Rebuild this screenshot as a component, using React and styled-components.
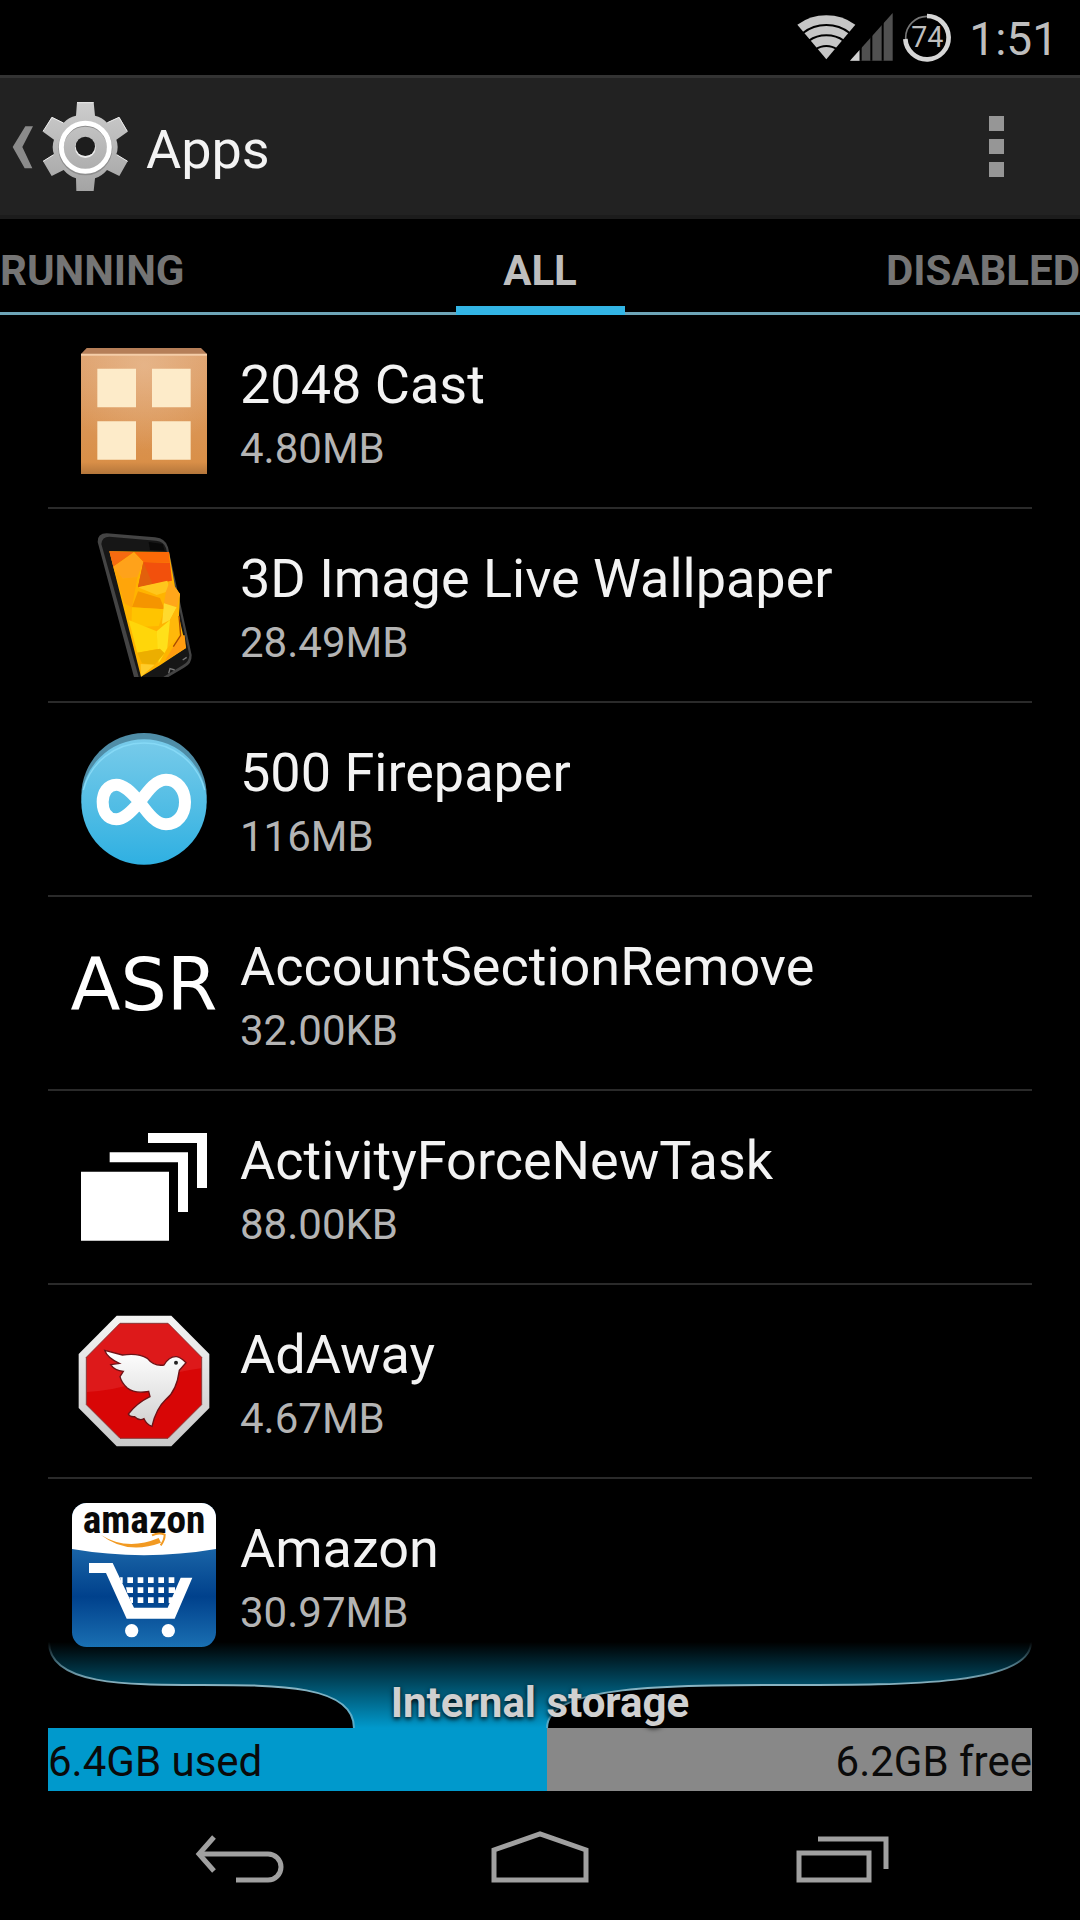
import React from 'react';
import styled, { createGlobalStyle, ThemeProvider } from 'styled-components';

const theme = {
  colors: {
    background: '#000000',
    actionBar: '#222222',
    text: '#f3f3f3',
    textSecondary: '#b4b4b4',
    textMuted: '#757575',
    holo: '#33b5e5',
    used: '#0099cc',
    free: '#888888',
    divider: '#2a2a2a',
    nav: '#a0a0a0'
  },
  fontSizes: {
    md: '42px',
    lg: '46px',
    xl: '54px'
  },
  gutter: '48px'
};

const GlobalStyle = createGlobalStyle`
  * {
    box-sizing: border-box;
  }

  body {
    margin: 0;
    background: #000;
    font-family: Roboto, sans-serif;
  }

  button {
    margin: 0;
    padding: 0;
    border: 0;
    background: none;
    color: inherit;
    font: inherit;
    text-align: left;
    cursor: pointer;
  }

  svg {
    display: block;
  }
`;

const Screen = styled.div`
  display: flex;
  flex-direction: column;
  height: 100vh;
  background: ${props => props.theme.colors.background};
  color: ${props => props.theme.colors.text};
  overflow: hidden;
`;

const StatusBar = styled.div`
  flex: none;
  display: flex;
  justify-content: flex-end;
  align-items: center;
  height: 75px;
  padding-right: 22px;
`;

const Clock = styled.time`
  margin-left: 7px;
  padding-top: 3px;
  font-size: ${props => props.theme.fontSizes.lg};
  line-height: 70px;
  color: #bebebe;
`;

const ActionBar = styled.header`
  flex: none;
  display: flex;
  align-items: center;
  height: 144px;
  padding: 0 56px 0 8px;
  background: ${props => props.theme.colors.actionBar};
  border-top: 3px solid #333333;
  border-bottom: 4px solid #1c1c1c;
`;

const UpButton = styled.button`
  margin-right: 15px;
`;

const Title = styled.h1`
  flex: 1;
  margin: 0;
  padding-top: 6px;
  font-size: ${props => props.theme.fontSizes.xl};
  font-weight: 400;
`;

const OverflowButton = styled.button`
  display: flex;
  flex-direction: column;
  align-items: center;
  gap: 8px;
  width: 56px;
`;

const Dot = styled.span`
  width: 15px;
  height: 15px;
  background: #969696;
`;

const Tabs = styled.nav`
  flex: none;
  display: grid;
  grid-template-columns: 1fr 169px 1fr;
  height: 96px;
  box-shadow: inset 0 -3px #6ea5b8;
`;

const Tab = styled.button`
  padding-top: 16px;
  border-bottom: 9px solid ${props => (props.$active ? props.theme.colors.holo : 'transparent')};
  font-size: ${props => props.theme.fontSizes.md};
  font-weight: 700;
  color: ${props => (props.$active ? '#bebebe' : props.theme.colors.textMuted)};
  text-align: ${props => props.$align};
`;

const AppList = styled.ul`
  flex: 1;
  min-height: 0;
  margin: 0;
  padding: 0 ${props => props.theme.gutter};
  list-style: none;
  overflow: hidden;
`;

const AppItem = styled.li`
  border-bottom: 2px solid ${props => props.theme.colors.divider};
`;

const AppButton = styled.button`
  display: flex;
  align-items: center;
  gap: 24px;
  width: 100%;
  height: 192px;
  padding: 0 24px;
`;

const IconSvg = styled.svg`
  flex: none;
  width: 144px;
  height: 144px;
  overflow: visible;
`;

const AppText = styled.span`
  display: flex;
  flex-direction: column;
  padding-top: 6px;
`;

const AppName = styled.span`
  font-size: ${props => props.theme.fontSizes.xl};
  line-height: 70px;
  white-space: nowrap;
`;

const AppSize = styled.span`
  font-size: ${props => props.theme.fontSizes.md};
  line-height: 58px;
  color: ${props => props.theme.colors.textSecondary};
`;

/* Pulled up a little so the glow starts over the last list row */
const Storage = styled.section`
  flex: none;
  margin: -8px ${props => props.theme.gutter} 0;
`;

const Funnel = styled.div`
  display: grid;
  height: 86px;

  & > * {
    grid-area: 1 / 1;
  }
`;

const FunnelSvg = styled.svg`
  width: 100%;
  height: 86px;
  overflow: visible;
`;

const StorageTitle = styled.h2`
  z-index: 1;
  align-self: end;
  margin: 0;
  font-size: ${props => props.theme.fontSizes.md};
  line-height: 50px;
  font-weight: 700;
  text-align: center;
  color: #d0d0d0;
  text-shadow: 0 2px 5px #000;
`;

const UsageBar = styled.div`
  display: flex;
  justify-content: space-between;
  height: 63px;
  font-size: ${props => props.theme.fontSizes.md};
  line-height: 68px;
  color: #0a0a0a;
  background: linear-gradient(
    to right,
    ${props => props.theme.colors.used} ${props => props.$used}%,
    ${props => props.theme.colors.free} ${props => props.$used}%
  );
`;

const NavBar = styled.nav`
  flex: none;
  display: grid;
  grid-template-columns: repeat(3, 1fr);
  height: 129px;
  padding: 0 90px;
`;

const NavButton = styled.button`
  display: grid;
  place-items: center;
  color: ${props => props.theme.colors.nav};
`;

const NetworkIcon = () => (
  <svg width="97" height="52" viewBox="52 34 291 156" aria-hidden="true">
    <path d="M140 176 L53 72 Q92 44 140 44 Q188 44 227 72 Z" fill="#c6c6c6" />
    <g fill="none" stroke="#000" strokeWidth="6">
      <path d="M70 97 Q100 73 140 73 Q180 73 210 97" />
      <path d="M88 120 Q110 104 140 104 Q170 104 192 120" />
      <path d="M108 146 Q122 136 140 136 Q158 136 172 146" />
    </g>
    <path d="M211 180 L339 37 V180 Z" fill="#505050" />
    <path d="M211 180 L240 148 V180 Z" fill="#d2d2d2" />
    <path d="M243 130 V180 M275 90 V180 M309 60 V180" stroke="#000" strokeWidth="6" />
  </svg>
);

const BatteryIcon = () => (
  <svg width="68" height="52" viewBox="342 34 204 156" aria-label="Battery 74%">
    <circle cx="441" cy="111" r="64" fill="none" stroke="#777" strokeWidth="5" />
    <path d="M441 46 A65 65 0 1 1 376 115" fill="none" stroke="#d6d6d6" strokeWidth="14" />
    <text x="442" y="138" fontSize="86" fill="#bebebe" textAnchor="middle" fontFamily="Roboto, sans-serif">
      74
    </text>
  </svg>
);

const SettingsIcon = () => (
  <svg width="123" height="96" viewBox="24 86 369 288" aria-hidden="true">
    <defs>
      <linearGradient id="gear" x1="0" y1="0" x2="0" y2="1">
        <stop offset="0" stopColor="#cdcdcd" />
        <stop offset="1" stopColor="#a4a4a4" />
      </linearGradient>
    </defs>
    <path d="M76 168 H99 L67 230 L97 294 H74 L38 230 Z" fill="#8b8b8b" />
    <path
      fill="url(#gear)"
      d="M231 96 H281 L285 136 Q306 141 321 157 L358 140 L383 184 L349 208 Q357 230 349 252 L383 273 L358 317 L321 299 Q306 317 285 324 L281 362 H229 L228 324 Q206 317 191 299 L155 317 L129 273 L162 252 Q154 230 162 208 L129 184 L155 140 L191 157 Q206 141 228 136 Z"
    />
    <path
      d="M231 97 H281 M129 183 L156 141 L190 158 M322 157 L357 141 L382 183 M129 273 L161 253 M350 253 L383 273"
      fill="none"
      stroke="#eee"
      strokeWidth="3"
    />
    <circle cx="256" cy="234" r="73" fill="none" stroke="#8d8d8d" strokeWidth="16" />
    <circle cx="256" cy="231" r="72" fill="none" stroke="#fff" strokeWidth="15" />
    <circle cx="256" cy="232" r="31" fill="#ededed" />
    <circle cx="256" cy="228" r="29" fill="#1d1d1d" />
  </svg>
);

const CastIcon = () => (
  <IconSvg viewBox="36 27 432 432" aria-hidden="true">
    <defs>
      <linearGradient id="cast" x1="0" y1="0" x2="0" y2="1">
        <stop offset="0" stopColor="#dda06c" />
        <stop offset="0.9" stopColor="#d98f48" />
        <stop offset="1" stopColor="#b4763b" />
      </linearGradient>
      <radialGradient id="castGlow" cx="0.5" cy="0.1" r="0.7">
        <stop offset="0" stopColor="#ecc29c" stopOpacity="0.6" />
        <stop offset="1" stopColor="#ecc29c" stopOpacity="0" />
      </radialGradient>
    </defs>
    <path d="M80 54 H423 L441 72 H63 Z" fill="#b57e58" />
    <path d="M63 72 H441 V432 H63 Z" fill="url(#cast)" />
    <path d="M63 72 H441 V432 H63 Z" fill="url(#castGlow)" />
    <path d="M63 74 H441" stroke="#f4cda8" strokeWidth="6" />
    <path d="M112 116 H228 V232 H112 Z M276 116 H392 V232 H276 Z M112 274 H228 V389 H112 Z M276 274 H392 V389 H276 Z" fill="#fdebc9" />
  </IconSvg>
);

const PhoneIcon = () => (
  <IconSvg viewBox="36 39 432 432" aria-hidden="true">
    <path d="M113 66 Q112 40 140 40 L285 52 Q318 56 324 82 L395 405 Q396 432 372 443 L325 471 H222 Z" fill="#444" />
    <path d="M124 72 Q126 50 148 50 L288 62 Q312 65 318 84 L388 405 Q388 426 368 436 L310 471 H236 Z" fill="#161616" />
    <path d="M266 66 L308 72 L314 92 L270 90 Z" fill="#080808" />
    <path d="M148 94 L327 96 L345 200 L360 222 L357 290 L378 384 L300 436 L243 470 Z" fill="#ffb400" />
    <path d="M148 94 L222 96 L160 140 Z" fill="#f56a10" />
    <path d="M222 96 L327 96 L330 128 L250 126 Z" fill="#fb6a07" />
    <path d="M222 98 L250 126 L232 172 L188 176 L160 140 Z" fill="#ffa21a" />
    <path d="M250 126 L330 128 L336 182 L234 202 Z" fill="#f2500c" />
    <path d="M250 126 L278 192 L234 202 Z" fill="#e2600c" />
    <path d="M234 202 L322 182 L330 212 L290 225 Z" fill="#ffc61c" />
    <path d="M160 140 L188 176 L232 172 L216 262 L192 250 Z" fill="#ffa50a" />
    <path d="M234 214 L300 234 L314 268 L216 262 Z" fill="#f59500" />
    <path d="M216 262 L314 268 L296 318 L214 322 Z" fill="#ffc400" />
    <path d="M330 182 L360 222 L350 262 L312 250 L318 214 Z" fill="#ffa61a" />
    <path d="M312 250 L350 262 L330 300 L306 312 Z" fill="#ffda2e" />
    <path d="M350 262 L360 300 L356 350 L322 384 L330 300 Z" fill="#ffb80a" />
    <path d="M206 300 L290 334 L296 386 L232 398 Z" fill="#ffd60a" />
    <path d="M290 334 L330 300 L322 384 L296 430 Z" fill="#ffe01a" />
    <path d="M232 398 L300 386 L314 400 L284 434 L246 430 Z" fill="#ecae00" />
    <path d="M242 432 L284 434 L243 470 Z" fill="#ffcc2a" />
    <path d="M360 346 L374 346 L378 384 L314 424 Z" fill="#ff9c10" />
    <path d="M357 288 L362 346 L340 380" fill="none" stroke="#a84a00" strokeWidth="4" />
    <path d="M326 460 L330 446 L344 450 M368 420 L380 412" fill="none" stroke="#777" strokeWidth="4" />
  </IconSvg>
);

const InfinityIcon = () => (
  <IconSvg viewBox="36 21 432 432" aria-hidden="true">
    <defs>
      <linearGradient id="sky" x1="0" y1="0" x2="0" y2="1">
        <stop offset="0" stopColor="#78cbea" />
        <stop offset="0.6" stopColor="#4dbbe4" />
        <stop offset="1" stopColor="#2fb0e2" />
      </linearGradient>
    </defs>
    <circle cx="252" cy="227" r="188" fill="#4f8da7" />
    <circle cx="252" cy="246" r="188" fill="url(#sky)" />
    <path d="M70 210 A188 188 0 0 1 434 210" fill="none" stroke="#86d9f6" strokeWidth="4" />
    <path
      d="M239 246 C210 212 190 194 169 194 C143 194 128 218 128 246 C128 276 143 298 169 298 C190 298 210 280 239 246 C268 206 290 179 318 179 C352 179 375 210 375 246 C375 284 352 313 318 313 C290 313 268 286 239 246 Z"
      fill="none"
      stroke="#fff"
      strokeWidth="36"
    />
  </IconSvg>
);

const AsrIcon = () => (
  <IconSvg viewBox="0 0 144 144" aria-hidden="true">
    <text x="72" y="89" fontSize="73" fill="#fff" textAnchor="middle" fontFamily="DejaVu Sans, sans-serif">
      ASR
    </text>
  </IconSvg>
);

const StackIcon = () => (
  <IconSvg viewBox="36 555 432 432" aria-hidden="true">
    <path d="M63 725 H327 V932 H63 Z M149 667 H384 V846 H354 V697 H149 Z M264 609 H441 V774 H411 V639 H264 Z" fill="#fff" />
  </IconSvg>
);

const DoveIcon = () => (
  <IconSvg viewBox="36 27 432 432" aria-hidden="true">
    <defs>
      <linearGradient id="rim" x1="0" y1="0" x2="0" y2="1">
        <stop offset="0" stopColor="#f4f4f4" />
        <stop offset="1" stopColor="#c9c9c9" />
      </linearGradient>
      <linearGradient id="dove" x1="0" y1="0" x2="0" y2="1">
        <stop offset="0" stopColor="#ffffff" />
        <stop offset="1" stopColor="#d2d2d2" />
      </linearGradient>
    </defs>
    <path d="M170 47 H334 L448 162 V324 L334 439 H170 L56 324 V162 Z" fill="url(#rim)" />
    <path d="M180 70 H324 L425 172 V314 L324 415 H180 L79 314 V172 Z" fill="#d80606" stroke="#8b3a3a" strokeWidth="3" />
    <path d="M180 72 H324 L423 172 V205 Q340 216 250 244 Q160 272 81 276 V172 Z" fill="#e8464a" opacity="0.3" />
    <path
      d="M134 151 L187 165 Q235 158 262 175 Q282 200 312 195 Q328 168 350 170 Q362 172 378 188 L358 211 Q350 272 318 298 Q288 326 276 379 Q260 374 252 356 Q238 364 224 350 Q210 352 205 342 Q232 308 270 290 L266 274 Q225 282 202 264 Q184 248 180 230 L190 214 Q164 212 152 194 L178 190 Q142 174 134 151 Z"
      fill="url(#dove)"
      stroke="#6e1216"
      strokeWidth="4"
    />
    <circle cx="348" cy="188" r="6" fill="#222" />
  </IconSvg>
);

const AmazonIcon = () => (
  <IconSvg viewBox="36 39 432 432" aria-hidden="true">
    <defs>
      <linearGradient id="blue" x1="0" y1="0" x2="0" y2="1">
        <stop offset="0.3" stopColor="#1b66a8" />
        <stop offset="0.65" stopColor="#00418c" />
        <stop offset="1" stopColor="#1a6fb2" />
      </linearGradient>
      <clipPath id="tile">
        <rect x="36" y="39" width="432" height="432" rx="44" />
      </clipPath>
    </defs>
    <g clipPath="url(#tile)">
      <path d="M36 39 H468 V471 H36 Z" fill="url(#blue)" />
      <path d="M36 39 H468 V177 Q252 214 36 177 Z" fill="#fff" />
    </g>
    <text
      x="252"
      y="129"
      fontSize="118"
      fontWeight="700"
      fill="#0a0a0a"
      textAnchor="middle"
      fontFamily="Liberation Sans Narrow, Roboto Condensed, sans-serif"
    >
      amazon
    </text>
    <path d="M122 134 Q200 184 296 144 L303 158 Q200 196 122 134 Z" fill="#f29a22" />
    <path d="M276 136 Q296 126 314 134 Q314 150 302 166" fill="none" stroke="#f29a22" strokeWidth="6" />
    <path d="M87 219 H158 L222 353 H323 L362 263 H397 L344 386 H200 L138 249 H87 Z" fill="#fff" />
    <g fill="#fff">
      <path d="M180 262 H188 V279 H184 Z M202 262 H219 V279 H202 Z M233 262 H250 V279 H233 Z M264 262 H281 V279 H264 Z M295 262 H312 V279 H295 Z M326 262 H343 V279 H326 Z" />
      <path d="M198 292 H219 V309 H202 Z M233 292 H250 V309 H233 Z M264 292 H281 V309 H264 Z M295 292 H312 V309 H295 Z M326 292 H345 V309 H326 Z" />
      <path d="M208 322 H219 V339 H214 Z M233 322 H250 V339 H233 Z M264 322 H281 V339 H264 Z M295 322 H312 V339 H295 Z M326 322 H338 V339 H326 Z" />
      <circle cx="215" cy="422" r="20" />
      <circle cx="325" cy="422" r="20" />
    </g>
  </IconSvg>
);

const apps = [
  { name: '2048 Cast', size: '4.80MB', icon: CastIcon },
  { name: '3D Image Live Wallpaper', size: '28.49MB', icon: PhoneIcon },
  { name: '500 Firepaper', size: '116MB', icon: InfinityIcon },
  { name: 'AccountSectionRemove', size: '32.00KB', icon: AsrIcon },
  { name: 'ActivityForceNewTask', size: '88.00KB', icon: StackIcon },
  { name: 'AdAway', size: '4.67MB', icon: DoveIcon },
  { name: 'Amazon', size: '30.97MB', icon: AmazonIcon }
];

const StorageFunnel = () => (
  <FunnelSvg viewBox="0 0 984 86" preserveAspectRatio="none" aria-hidden="true">
    <defs>
      <linearGradient id="glow" x1="0" y1="0" x2="0" y2="1">
        <stop offset="0" stopColor="#0099cc" stopOpacity="0" />
        <stop offset="1" stopColor="#0099cc" />
      </linearGradient>
      <linearGradient id="edge" gradientUnits="userSpaceOnUse" x1="0" y1="0" x2="0" y2="86">
        <stop offset="0" stopColor="#9fc4d2" stopOpacity="0" />
        <stop offset="0.5" stopColor="#8ab4c2" />
        <stop offset="1" stopColor="#4fa9c8" />
      </linearGradient>
    </defs>
    <path d="M0 0 C0 86 306 0 306 86 H499 C499 0 984 86 984 0 Z" fill="url(#glow)" />
    <path d="M1 0 C1 86 306 0 306 86 M499 86 C499 0 983 86 983 0" fill="none" stroke="url(#edge)" strokeWidth="2" />
  </FunnelSvg>
);

const App = () => {
  const tabs = [
    { label: 'RUNNING', align: 'left' },
    { label: 'ALL', align: 'center', active: true },
    { label: 'DISABLED', align: 'right' }
  ];

  return (
    <ThemeProvider theme={theme}>
      <GlobalStyle />
      <Screen>
        <StatusBar>
          <NetworkIcon />
          <BatteryIcon />
          <Clock>1:51</Clock>
        </StatusBar>

        <ActionBar>
          <UpButton aria-label="Back to settings">
            <SettingsIcon />
          </UpButton>
          <Title>Apps</Title>
          <OverflowButton aria-label="More options">
            <Dot />
            <Dot />
            <Dot />
          </OverflowButton>
        </ActionBar>

        <Tabs>
          {tabs.map(tab => (
            <Tab key={tab.label} $align={tab.align} $active={tab.active}>
              {tab.label}
            </Tab>
          ))}
        </Tabs>

        <AppList>
          {apps.map(({ name, size, icon: Icon }) => (
            <AppItem key={name}>
              <AppButton>
                <Icon />
                <AppText>
                  <AppName>{name}</AppName>
                  <AppSize>{size}</AppSize>
                </AppText>
              </AppButton>
            </AppItem>
          ))}
        </AppList>

        <Storage>
          <Funnel>
            <StorageFunnel />
            <StorageTitle>Internal storage</StorageTitle>
          </Funnel>
          <UsageBar $used={50.7}>
            <span>6.4GB used</span>
            <span>6.2GB free</span>
          </UsageBar>
        </Storage>

        <NavBar>
          <NavButton aria-label="Back">
            <svg width="96" height="60" viewBox="0 0 96 60" fill="none" stroke="currentColor" strokeWidth="5" aria-hidden="true">
              <path d="M7 28 H76 A13 13 0 0 1 76 54 H44" />
              <path d="M22 11 L7 28 L22 45" />
            </svg>
          </NavButton>
          <NavButton aria-label="Home">
            <svg width="104" height="60" viewBox="0 0 104 60" fill="none" stroke="currentColor" strokeWidth="5" aria-hidden="true">
              <path d="M6 54 V24 L52 8 L98 24 V54 Z" />
            </svg>
          </NavButton>
          <NavButton aria-label="Recent apps">
            <svg width="104" height="60" viewBox="0 0 104 60" fill="none" stroke="currentColor" strokeWidth="5" aria-hidden="true">
              <path d="M11 27 H81 V54 H11 Z" />
              <path d="M30 13 H98 V43" />
            </svg>
          </NavButton>
        </NavBar>
      </Screen>
    </ThemeProvider>
  );
};

export default App;
